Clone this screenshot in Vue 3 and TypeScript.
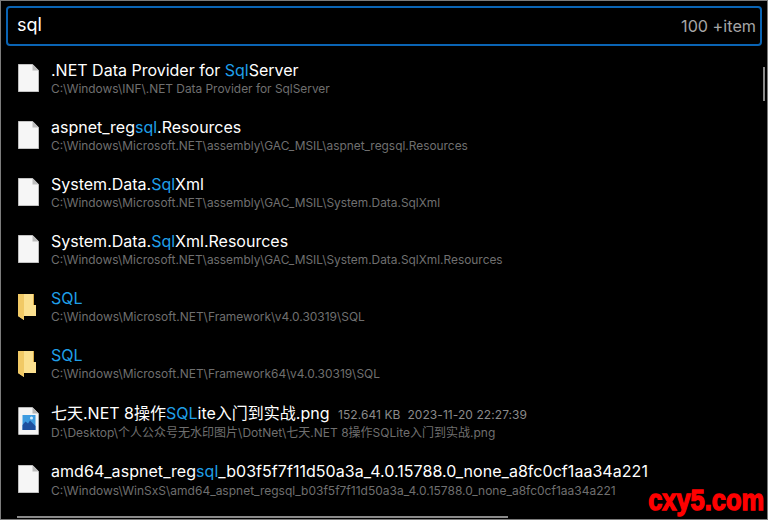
<script setup lang="ts">
interface Part { t: string; hl?: boolean }
interface Row { icon: 'file' | 'folder' | 'image'; title: Part[]; sub: string; meta?: string }
const rows: Row[] = [
  { icon: 'file', title: [{ t: '.NET Data Provider for ' }, { t: 'Sql', hl: true }, { t: 'Server' }], sub: 'C:\\Windows\\INF\\.NET Data Provider for SqlServer' },
  { icon: 'file', title: [{ t: 'aspnet_reg' }, { t: 'sql', hl: true }, { t: '.Resources' }], sub: 'C:\\Windows\\Microsoft.NET\\assembly\\GAC_MSIL\\aspnet_regsql.Resources' },
  { icon: 'file', title: [{ t: 'System.Data.' }, { t: 'Sql', hl: true }, { t: 'Xml' }], sub: 'C:\\Windows\\Microsoft.NET\\assembly\\GAC_MSIL\\System.Data.SqlXml' },
  { icon: 'file', title: [{ t: 'System.Data.' }, { t: 'Sql', hl: true }, { t: 'Xml.Resources' }], sub: 'C:\\Windows\\Microsoft.NET\\assembly\\GAC_MSIL\\System.Data.SqlXml.Resources' },
  { icon: 'folder', title: [{ t: 'SQL', hl: true }], sub: 'C:\\Windows\\Microsoft.NET\\Framework\\v4.0.30319\\SQL' },
  { icon: 'folder', title: [{ t: 'SQL', hl: true }], sub: 'C:\\Windows\\Microsoft.NET\\Framework64\\v4.0.30319\\SQL' },
  { icon: 'image', title: [{ t: '七天.NET 8操作' }, { t: 'SQL', hl: true }, { t: 'ite入门到实战.png' }], meta: '152.641 KB  2023-11-20 22:27:39', sub: 'D:\\Desktop\\个人公众号无水印图片\\DotNet\\七天.NET 8操作SQLite入门到实战.png' },
  { icon: 'file', title: [{ t: 'amd64_aspnet_reg' }, { t: 'sql', hl: true }, { t: '_b03f5f7f11d50a3a_4.0.15788.0_none_a8fc0cf1aa34a221' }], sub: 'C:\\Windows\\WinSxS\\amd64_aspnet_regsql_b03f5f7f11d50a3a_4.0.15788.0_none_a8fc0cf1aa34a221' },
]
</script>

<template>
  <div class="win">
    <div class="search">
      <span class="query">sql</span>
      <span class="count">100 +item</span>
    </div>
    <div class="list">
      <div v-for="(r, i) in rows" :key="i" class="row" :class="{ tall: i >= 5, late: i >= 6, mid: i === 4 || i === 5, hex: i === 7 }">
        <svg v-if="r.icon === 'file'" class="icon" width="21" height="28" viewBox="0 0 21 28">
          <path d="M0.3 0.3H14.5L20.7 6.5V27.7H0.3Z" fill="#f6f6f6" stroke="#cfcfcf" stroke-width="0.6" />
          <path d="M14.5 0.3V6.5H20.7Z" fill="#bdbdbd" />
        </svg>
        <svg v-else-if="r.icon === 'folder'" class="icon" width="21" height="28" viewBox="0 0 21 28">
          <path d="M0 2H15V13H18V24H6V28L0 24Z" fill="#fbe08f" />
          <path d="M0 2H6V28L0 24Z" fill="#f1c965" />
          <path d="M15 2H16V13H15Z" fill="#d9ab45" />
        </svg>
        <svg v-else class="icon" width="21" height="28" viewBox="0 0 21 28">
          <path d="M0.3 0.3H14.5L20.7 6.5V27.7H0.3Z" fill="#f4f4f4" />
          <path d="M14.5 0.3V6.5H20.7Z" fill="#b5b5b5" />
          <rect x="4.5" y="8" width="13" height="15" fill="#3d9be0" />
          <circle cx="13.5" cy="11" r="1.5" fill="#d5ecfb" />
          <path d="M4.5 23V18L7.5 14.5L10 16.5L12 13.5L17.5 19V23Z" fill="#1d4f9e" />
        </svg>
        <div class="text">
          <div class="line">
            <span class="title"><template v-for="(p, j) in r.title" :key="j"><span :class="{ hl: p.hl }">{{ p.t }}</span></template></span>
            <span v-if="r.meta" class="meta">{{ r.meta }}</span>
          </div>
          <div class="sub">{{ r.sub }}</div>
        </div>
      </div>
    </div>
    <div class="vbar"></div>
    <div class="hbar"></div>
    <div class="mark">cxy5.com</div>
  </div>
</template>

<style>
html, body { margin: 0; background: #000; }
</style>

<style scoped>
.win {
  position: relative;
  box-sizing: border-box;
  width: 768px;
  height: 520px;
  overflow: hidden;
  background: #000;
  border: 1px solid #7c7c7c;
  padding: 5px 5px 0;
  font-family: Inter, "Noto Sans CJK SC", sans-serif;
}
.search {
  box-sizing: border-box;
  height: 40px;
  display: flex;
  align-items: center;
  justify-content: space-between;
  border: 2px solid #0a64b4;
  border-radius: 4px;
  padding: 0 4px 0 9px;
}
.query { color: #fff; font-size: 18px; margin-top: -3px; }
.count { color: #a6a6a6; font-size: 16.2px; }
.list {
  display: flex;
  flex-direction: column;
  padding-top: 10px;
}
.row {
  height: 57px;
  display: flex;
  align-items: flex-start;
  padding-left: 12px;
  box-sizing: border-box;
}
.row.tall { height: 58px; }
.icon { flex: none; margin-top: 8px; margin-right: 12px; }
.text { padding-top: 2px; min-width: 0; }
.line { display: flex; align-items: baseline; white-space: nowrap; height: 24px; line-height: 24px; }
.title { color: #fff; font-size: 16px; white-space: nowrap; }
.hl { color: #1f9fe8; }
.meta { color: #8a8a8a; font-size: 12px; margin-left: 8.5px; letter-spacing: 0.07px; white-space: pre; }
.sub { color: #6f6f6f; font-size: 11.9px; line-height: 14px; white-space: nowrap; }
.row.mid .sub { font-size: 11.97px; }
.row.late .sub { font-size: 12px; margin-top: 1px; }
.row.hex .title { letter-spacing: 0.045px; }
.vbar {
  position: absolute;
  right: 2px;
  top: 66px;
  width: 2px;
  height: 34px;
  background: #8a8a8a;
}
.hbar {
  position: absolute;
  left: 16px;
  bottom: 1px;
  width: 491px;
  height: 2px;
  background: #8a8a8a;
}
.mark {
  position: absolute;
  right: 3px;
  bottom: 3px;
  color: #f00;
  font-family: "Liberation Sans", sans-serif;
  font-weight: 700;
  font-size: 25.4px;
  line-height: 28px;
  -webkit-text-stroke: 1.2px #f00;
  transform: scaleY(1.18);
  transform-origin: bottom right;
}
</style>
